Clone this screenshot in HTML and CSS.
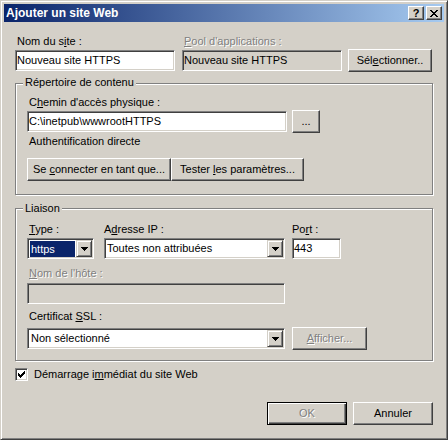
FILE: index.html
```html
<!DOCTYPE html>
<html lang="fr">
<head>
<meta charset="utf-8">
<title>Ajouter un site Web</title>
<link rel="stylesheet" href="styles.css">
</head>
<body>
<div class="window">
  <div class="titlebar">
    <span class="title">Ajouter un site Web</span>
    <span class="tbtns">
      <span class="tbtn help">?</span>
      <span class="tbtn close"><svg width="8" height="7" viewBox="0 0 8 7" shape-rendering="crispEdges"><path d="M0 0h2v1h-2zM6 0h2v1h-2zM1 1h2v1h-2zM5 1h2v1h-2zM2 2h4v1h-4zM3 3h2v1h-2zM2 4h4v1h-4zM1 5h2v1h-2zM5 5h2v1h-2zM0 6h2v1h-2zM6 6h2v1h-2z" fill="#000"/></svg></span>
    </span>
  </div>
  <div class="content">
    <div class="row r1">
      <div class="field f-name">
        <div class="lbl">Nom du s<u>i</u>te :</div>
        <div class="edit">Nouveau site HTTPS</div>
      </div>
      <div class="field f-pool">
        <div class="lbl dis"><u>P</u>ool d'applications :</div>
        <div class="edit ro">Nouveau site HTTPS</div>
      </div>
      <div class="btn b-sel"><span>Sél<u>e</u>ctionner..</span></div>
    </div>

    <div class="group g1">
      <div class="legend">Répertoire de contenu</div>
      <div class="lbl l-path">C<u>h</u>emin d'accès physique :</div>
      <div class="row r-path">
        <div class="edit e-path">C:\inetpub\wwwrootHTTPS</div>
        <div class="btn b-browse"><span>...</span></div>
      </div>
      <div class="lbl l-auth">Authentification directe</div>
      <div class="row r-auth">
        <div class="btn b-conn"><span>Se <u>c</u>onnecter en tant que...</span></div>
        <div class="btn b-test"><span>Tester <u>l</u>es paramètres...</span></div>
      </div>
    </div>

    <div class="group g2">
      <div class="legend">Liaison</div>
      <div class="row r-bind">
        <div class="field f-type">
          <div class="lbl l-type"><u>T</u>ype :</div>
          <div class="combo c-type">
            <div class="val"><span class="hl">https</span></div>
            <div class="drop"><svg width="7" height="4" viewBox="0 0 7 4" shape-rendering="crispEdges"><path d="M0 0h7v1h-7zM1 1h5v1h-5zM2 2h3v1h-3zM3 3h1v1h-1z" fill="#000"/></svg></div>
          </div>
        </div>
        <div class="field f-ip">
          <div class="lbl l-ip">A<u>d</u>resse IP :</div>
          <div class="combo c-ip">
            <div class="val">Toutes non attribuées</div>
            <div class="drop"><svg width="7" height="4" viewBox="0 0 7 4" shape-rendering="crispEdges"><path d="M0 0h7v1h-7zM1 1h5v1h-5zM2 2h3v1h-3zM3 3h1v1h-1z" fill="#000"/></svg></div>
          </div>
        </div>
        <div class="field f-port">
          <div class="lbl l-port">Po<u>r</u>t :</div>
          <div class="edit e-port">443</div>
        </div>
      </div>
      <div class="lbl dis l-host"><u>N</u>om de l'hôte :</div>
      <div class="edit ro e-host"></div>
      <div class="lbl l-ssl">Certificat <u>S</u>SL :</div>
      <div class="row r-ssl">
        <div class="combo c-ssl">
          <div class="val">Non sélectionné</div>
          <div class="drop"><svg width="7" height="4" viewBox="0 0 7 4" shape-rendering="crispEdges"><path d="M0 0h7v1h-7zM1 1h5v1h-5zM2 2h3v1h-3zM3 3h1v1h-1z" fill="#000"/></svg></div>
        </div>
        <div class="btn b-show dis"><span><u>A</u>fficher...</span></div>
      </div>
    </div>

    <div class="check-row">
      <span class="check"><svg width="7" height="7" viewBox="0 0 7 7" shape-rendering="crispEdges"><path d="M6 0h1v1h-1zM5 1h2v1h-2zM0 2h1v1h-1zM4 2h3v1h-3zM0 3h2v1h-2zM3 3h3v1h-3zM0 4h5v1h-5zM1 5h3v1h-3zM2 6h1v1h-1z" fill="#000"/></svg></span>
      <span class="check-lbl">Démarrage i<u>m</u>médiat du site Web</span>
    </div>

    <div class="row r-ok">
      <div class="btn b-ok def dis"><span>OK</span></div>
      <div class="btn b-cancel"><span>Annuler</span></div>
    </div>
  </div>
</div>
</body>
</html>
```
FILE: styles.css
```css
* { box-sizing: border-box; }
html, body { margin: 0; padding: 0; }
body {
  width: 448px;
  height: 440px;
  overflow: hidden;
  background: #D4D0C8;
  color: #000;
  font-family: "Liberation Sans", Arial, sans-serif;
  font-size: 11px;
  line-height: 13px;
}
u { text-decoration: underline; text-underline-offset: 1px; }

.window {
  width: 448px;
  height: 440px;
  background: #D4D0C8;
  border: 1px solid;
  border-color: #D4D0C8 #404040 #404040 #D4D0C8;
  box-shadow: inset 1px 1px 0 #fff, inset -1px -1px 0 #808080;
  padding: 3px;
  display: flex;
  flex-direction: column;
}

/* title bar */
.titlebar {
  height: 18px;
  flex: none;
  display: flex;
  align-items: center;
  padding-left: 2px;
  background: linear-gradient(to right, #0A246A, #A6CAF0);
}
.title {
  color: #fff;
  font-weight: bold;
  font-size: 12px;
  line-height: 14px;
}
.tbtns {
  margin-left: auto;
  margin-right: 2px;
  display: flex;
  gap: 2px;
}
.tbtn {
  width: 16px;
  height: 14px;
  display: flex;
  align-items: center;
  justify-content: center;
  background: #D4D0C8;
  border: 1px solid;
  border-color: #fff #404040 #404040 #fff;
  box-shadow: inset -1px -1px 0 #808080;
}
.help {
  font-weight: bold;
  font-size: 11px;
  line-height: 11px;
  padding-top: 1px;
}
.close svg { display: block; }

/* content */
.content {
  flex: 1;
  display: flex;
  flex-direction: column;
  padding: 0 11px;
}
.row { display: flex; }
.field { display: flex; flex-direction: column; }

.lbl { height: 13px; padding-left: 2px; white-space: nowrap; }
.dis, .dis span { color: #808080; text-shadow: 1px 1px 0 #fff; }
.dis u { text-decoration-color: #808080; }

/* sunken edit */
.edit {
  height: 21px;
  border: 1px solid;
  border-color: #808080 #fff #fff #808080;
  box-shadow: inset 1px 1px 0 #404040, inset -1px -1px 0 #D4D0C8;
  background: #fff;
  padding: 0 0 0 1px;
  line-height: 19px;
  white-space: nowrap;
  overflow: hidden;
}
.edit.ro { background: #D4D0C8; }

/* raised button */
.btn {
  height: 23px;
  display: flex;
  align-items: center;
  justify-content: center;
  white-space: nowrap;
  background: #D4D0C8;
  border: 1px solid;
  border-color: #fff #404040 #404040 #fff;
  box-shadow: inset -1px -1px 0 #808080, inset 1px 1px 0 #D4D0C8;
}
.btn.def {
  border-color: #000;
  box-shadow: inset 1px 1px 0 #fff, inset -1px -1px 0 #404040, inset -2px -2px 0 #808080;
}

/* combo */
.combo {
  height: 21px;
  display: flex;
  border: 1px solid;
  border-color: #808080 #fff #fff #808080;
  box-shadow: inset 1px 1px 0 #404040, inset -1px -1px 0 #D4D0C8;
  background: #fff;
  padding: 1px;
}
.val {
  flex: 1;
  display: flex;
  line-height: 17px;
  padding-left: 1px;
  white-space: nowrap;
  overflow: hidden;
}
.drop {
  width: 16px;
  height: 17px;
  flex: none;
  display: flex;
  align-items: center;
  justify-content: center;
  background: #D4D0C8;
  border: 1px solid;
  border-color: #D4D0C8 #404040 #404040 #D4D0C8;
  box-shadow: inset 1px 1px 0 #fff, inset -1px -1px 0 #808080;
}
.drop svg { display: block; margin-top: 1px; }

/* top row */
.r1 { margin-top: 13px; align-items: flex-end; }
.r1 .lbl { margin-bottom: 2px; }
.f-name { width: 160px; }
.f-pool { width: 160px; margin-left: 7px; }
.b-sel { width: 84px; margin-left: 6px; margin-bottom: -1px; }

/* groups */
.group {
  display: flex;
  flex-direction: column;
  border: 1px solid #808080;
  box-shadow: 1px 1px 0 #fff, inset 1px 1px 0 #fff;
  padding: 0 11px 0 11px;
}
.legend {
  align-self: flex-start;
  height: 13px;
  background: #D4D0C8;
  padding: 0 2px;
  margin-left: -4px;
  white-space: nowrap;
}
.g1 { margin-top: 12px; padding-bottom: 13px; }
.g1 .legend { margin-top: -8px; }
.l-path { margin-top: 7px; }
.r-path { margin-top: 1px; align-items: center; height: 23px; }
.e-path { width: 260px; }
.b-browse { width: 28px; margin-left: 5px; }
.l-auth { margin-top: 2px; }
.r-auth { margin-top: 10px; }
.b-conn { width: 144px; }
.b-test { width: 133px; }

.g2 { margin-top: 13px; padding-bottom: 10px; }
.g2 .legend { margin-top: -7px; }
.r-bind { margin-top: 8px; }
.r-bind .lbl { margin-bottom: 2px; padding-left: 0; }
.r-bind .l-type { padding-left: 2px; }
.f-type { width: 67px; }
.f-ip { width: 181px; margin-left: 10px; }
.f-port { width: 49px; margin-left: 7px; }
.hl {
  background: #0A246A;
  color: #fff;
  flex: 1;
  margin: 1px 1px 0 0;
  line-height: 16px;
  padding-left: 1px;
}
.l-host { margin-top: 8px; }
.e-host { width: 258px; margin-top: 3px; }
.l-ssl { margin-top: 6px; }
.r-ssl { margin-top: 4px; align-items: center; height: 23px; }
.c-ssl { width: 258px; }
.c-ssl .val { padding-left: 2px; }
.b-show { width: 75px; margin-left: 7px; }

/* checkbox */
.check-row { margin-top: 7px; height: 13px; display: flex; align-items: center; }
.check {
  width: 13px;
  height: 13px;
  flex: none;
  display: flex;
  align-items: center;
  justify-content: center;
  background: #fff;
  border: 1px solid;
  border-color: #808080 #fff #fff #808080;
  box-shadow: inset 1px 1px 0 #404040, inset -1px -1px 0 #D4D0C8;
}
.check svg { display: block; }
.check-lbl { margin-left: 6px; white-space: nowrap; }

/* OK / Cancel */
.r-ok { margin-top: 21px; justify-content: flex-end; gap: 6px; }
.b-ok, .b-cancel { width: 80px; }
```
